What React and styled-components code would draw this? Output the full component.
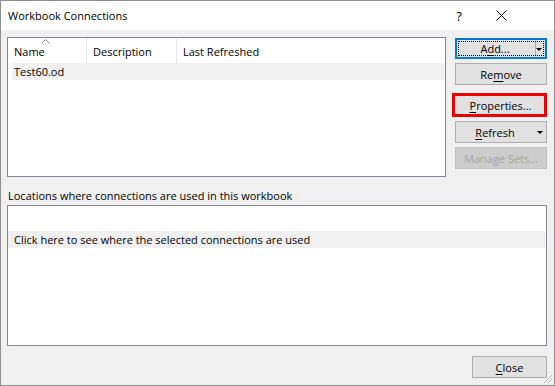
import React from "react";
import styled, { createGlobalStyle, css } from "styled-components";

const GlobalStyle = createGlobalStyle`
    html, body {
        margin: 0;
        padding: 0;
        background: #ffffff;
    }
    body {
        font-family: "Open Sans", "Noto Sans", Arial, sans-serif;
        font-size: 11px;
        color: #000000;
    }
`

const Window = styled.div`
    position: relative;
    width: 555px;
    height: 386px;
    box-sizing: border-box;
    border: 1px solid #8e8e8e;
    display: flex;
    flex-direction: column;
    background-color: #f0f0f0;
    overflow: hidden;
`

const TitleBar = styled.div`
    height: 29px;
    flex-shrink: 0;
    background-color: #ffffff;
    display: flex;
    align-items: center;
    padding-left: 7px;
    padding-right: 32px;
`

const Title = styled.div`
    flex: 1;
    font-size: 11px;
`

const TitleButton = styled.div`
    width: 42px;
    height: 29px;
    display: flex;
    align-items: center;
    justify-content: center;
    font-size: 13px;
`

const Body = styled.div`
    flex: 1;
    display: flex;
    flex-direction: column;
    padding: 7px 7px 0 6px;
`

const TopRow = styled.div`
    display: flex;
    justify-content: space-between;
    height: 140px;
`

const ListBox = styled.div`
    width: 439px;
    box-sizing: border-box;
    border: 1px solid #828790;
    background-color: #ffffff;
    display: flex;
    flex-direction: column;
`

const HeaderRow = styled.div`
    height: 25px;
    display: flex;
    align-items: stretch;
`

const HeaderCell = styled.div`
    position: relative;
    width: ${p => p.w}px;
    box-sizing: border-box;
    padding-left: 6px;
    padding-top: 1px;
    display: flex;
    align-items: center;
    border-right: ${p => (p.last ? "none" : "1px solid #e5e5e5")};
`

const SortArrow = styled.svg`
    position: absolute;
    left: 33px;
    top: 1px;
`

const DataRow = styled.div`
    margin-left: 4px;
    height: 17px;
    background-color: #f0f0f0;
    display: flex;
    align-items: center;
    padding-left: 2px;
`

const ButtonColumn = styled.div`
    width: 92px;
    display: flex;
    flex-direction: column;
    padding-top: 1px;
`

const Button = styled.div`
    position: relative;
    box-sizing: border-box;
    height: ${p => p.h || 22}px;
    margin-top: ${p => p.mt || 0}px;
    background-color: ${p => (p.disabled ? "#cccccc" : "#e1e1e1")};
    border: 1px solid ${p => (p.disabled ? "#bfbfbf" : "#adadad")};
    color: ${p => (p.disabled ? "#a3a3a3" : "#000000")};
    display: flex;
    align-items: center;
    justify-content: center;
    padding-right: ${p => (p.split ? 12 : 0)}px;
    ${p => p.focused && css`
        border: 2px solid #0078d7;
        &::after {
            content: "";
            position: absolute;
            left: 1px;
            top: 1px;
            right: 1px;
            bottom: 1px;
            border: 1px dotted #000000;
        }
    `}
`

const Highlight = styled.div`
    margin-top: 8px;
    margin-left: -3px;
    border: 3px solid #ee0000;
    height: 24px;
    box-sizing: border-box;
    display: flex;
`

const HighlightedFace = styled.div`
    flex: 1;
    background-color: #e1e1e1;
    display: flex;
    align-items: center;
    justify-content: center;
    padding-left: 2px;
`

const Arrow = styled.span`
    position: absolute;
    right: 3px;
    top: 50%;
    margin-top: -1px;
    width: 0;
    height: 0;
    border-left: 3px solid transparent;
    border-right: 3px solid transparent;
    border-top: 3px solid #000000;
`

const SplitLine = styled.span`
    position: absolute;
    right: 9px;
    top: 2px;
    bottom: 2px;
    width: 1px;
    background-color: #adadad;
`

const Key = styled.span`
    text-decoration: underline;
    text-underline-offset: 2px;
`

const SectionLabel = styled.div`
    margin-top: 9px;
    height: 19px;
    display: flex;
    align-items: center;
    padding-left: 1px;
`

const LocationsBox = styled.div`
    height: 141px;
    box-sizing: border-box;
    border: 1px solid #828790;
    background-color: #ffffff;
    display: flex;
    flex-direction: column;
    padding-top: 25px;
    padding-right: 1px;
`

const LocationsRow = styled.div`
    height: 17px;
    background-color: #f0f0f0;
    display: flex;
    align-items: center;
    padding-left: 6px;
`

const Footer = styled.div`
    display: flex;
    justify-content: flex-end;
    margin-top: 10px;
`

const CloseButton = styled(Button)`
    width: 75px;
`

const Grip = styled.svg`
    position: absolute;
    right: 1px;
    bottom: 1px;
`

const columns = [
    { label: "Name", w: 79 },
    { label: "Description", w: 90 },
    { label: "Last Refreshed", w: 268, last: true },
]

const App = () => {
    return (
        <>
            <GlobalStyle />
            <Window>
                <TitleBar>
                    <Title>Workbook Connections</Title>
                    <TitleButton>?</TitleButton>
                    <TitleButton>
                        <svg width="11" height="11" viewBox="0 0 11 11">
                            <path d="M0.5 0.5 L10.5 10.5 M10.5 0.5 L0.5 10.5" stroke="#000" strokeWidth="1" fill="none" />
                        </svg>
                    </TitleButton>
                </TitleBar>
                <Body>
                    <TopRow>
                        <ListBox>
                            <HeaderRow>
                                {columns.map((col, i) => (
                                    <HeaderCell key={i} w={col.w} last={col.last}>
                                        {i === 0 && (
                                            <SortArrow width="9" height="5" viewBox="0 0 9 5">
                                                <path d="M0.5 4.5 L4.5 0.5 L8.5 4.5" stroke="#8a8a8a" fill="none" />
                                            </SortArrow>
                                        )}
                                        {col.label}
                                    </HeaderCell>
                                ))}
                            </HeaderRow>
                            <DataRow>Test60.od</DataRow>
                        </ListBox>
                        <ButtonColumn>
                            <Button focused split h={21}>
                                A<Key>d</Key>d...
                                <SplitLine />
                                <Arrow />
                            </Button>
                            <Button mt={4}>Re<Key>m</Key>ove</Button>
                            <Highlight>
                                <HighlightedFace><Key>P</Key>roperties...</HighlightedFace>
                            </Highlight>
                            <Button mt={4} split>
                                <Key>R</Key>efresh
                                <Arrow />
                            </Button>
                            <Button mt={4} disabled>Manage Sets...</Button>
                        </ButtonColumn>
                    </TopRow>
                    <SectionLabel>Locations where connections are used in this workbook</SectionLabel>
                    <LocationsBox>
                        <LocationsRow>Click here to see where the selected connections are used</LocationsRow>
                    </LocationsBox>
                    <Footer>
                        <CloseButton><Key>C</Key>lose</CloseButton>
                    </Footer>
                </Body>
                <Grip width="12" height="12" viewBox="0 0 12 12">
                    <path d="M11 3 L3 11 M11 7 L7 11" stroke="#b8b8b8" strokeWidth="1" fill="none" />
                    <path d="M11 4 L4 11 M11 8 L8 11" stroke="#ffffff" strokeWidth="1" fill="none" />
                </Grip>
            </Window>
        </>
    )
}

export default App;
